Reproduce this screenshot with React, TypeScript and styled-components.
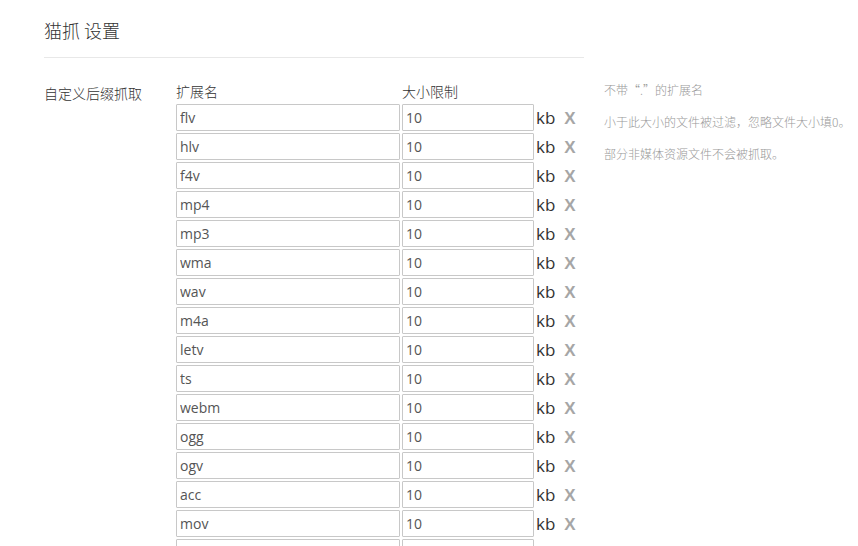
import React from 'react';
import styled, { createGlobalStyle } from 'styled-components';

const GlobalStyle = createGlobalStyle`
  html, body {
    margin: 0;
    padding: 0;
    background: #fff;
    overflow: hidden;
  }
  body {
    font-family: "Noto Sans", "Noto Sans CJK SC", sans-serif;
    color: #333;
  }
`;

const Page = styled.div`
  padding: 17px 0 0 44px;
  height: 546px;
  box-sizing: border-box;
`;

const Title = styled.h1`
  width: 540px;
  margin: 0;
  padding-bottom: 14px;
  border-bottom: 1px solid #e8e8e8;
  font-size: 18px;
  font-weight: 300;
  line-height: 26px;
  color: #333;
  font-family: "Noto Sans CJK SC", sans-serif;
`;

const FormRow = styled.div`
  display: flex;
  margin-top: 23px;
`;

const RowLabel = styled.div`
  width: 132px;
  font-size: 14px;
  font-weight: 300;
  line-height: 24px;
  color: #333;
  font-family: "Noto Sans CJK SC", sans-serif;
`;

const Table = styled.div`
  display: flex;
  flex-direction: column;
  gap: 2px;
  width: 408px;
`;

const HeadRow = styled.div`
  display: flex;
  font-size: 14px;
  font-weight: 300;
  line-height: 20px;
  height: 21px;
  font-family: "Noto Sans CJK SC", sans-serif;
  color: #333;
`;

const HeadCell = styled.div<{ $w: number }>`
  width: ${(p) => p.$w}px;
  margin-right: 2px;
`;

const Row = styled.div`
  display: flex;
  align-items: center;
  height: 27px;
`;

const Field = styled.input<{ $w: number }>`
  width: ${(p) => p.$w}px;
  height: 27px;
  box-sizing: border-box;
  margin: 0 2px 0 0;
  padding: 0 3px;
  border: 1px solid #c8c8c8;
  border-radius: 1px;
  font-family: "Open Sans", "Noto Sans", sans-serif;
  font-size: 14px;
  color: #555;
  background: #fff;
  outline: none;
`;

const Unit = styled.span`
  font-family: "Open Sans", "Noto Sans", sans-serif;
  font-size: 17px;
  color: #333;
`;

const Remove = styled.span`
  margin-left: 9px;
  padding-top: 2px;
  font-family: "Liberation Sans", Arial, sans-serif;
  font-weight: bold;
  font-size: 17px;
  color: #a6a6a6;
  cursor: pointer;
`;

const Help = styled.div`
  margin-left: 20px;
  display: flex;
  flex-direction: column;
  gap: 14px;
  font-size: 12px;
  font-weight: 300;
  line-height: 18px;
  color: #999;
  font-family: "Noto Sans CJK SC", sans-serif;
  white-space: nowrap;
`;

const exts = [
  'flv', 'hlv', 'f4v', 'mp4', 'mp3', 'wma', 'wav', 'm4a',
  'letv', 'ts', 'webm', 'ogg', 'ogv', 'acc', 'mov', 'mkv',
];

export default function App() {
  return (
    <>
      <GlobalStyle />
      <Page>
        <Title>猫抓 设置</Title>
        <FormRow>
          <RowLabel>自定义后缀抓取</RowLabel>
          <Table>
            <HeadRow>
              <HeadCell $w={224}>扩展名</HeadCell>
              <HeadCell $w={132}>大小限制</HeadCell>
            </HeadRow>
            {exts.map((e) => (
              <Row key={e}>
                <Field $w={224} defaultValue={e} />
                <Field $w={132} defaultValue="10" />
                <Unit>kb</Unit>
                <Remove>X</Remove>
              </Row>
            ))}
          </Table>
          <Help>
            <div>不带“.”的扩展名</div>
            <div>小于此大小的文件被过滤，忽略文件大小填0。</div>
            <div>部分非媒体资源文件不会被抓取。</div>
          </Help>
        </FormRow>
      </Page>
    </>
  );
}
